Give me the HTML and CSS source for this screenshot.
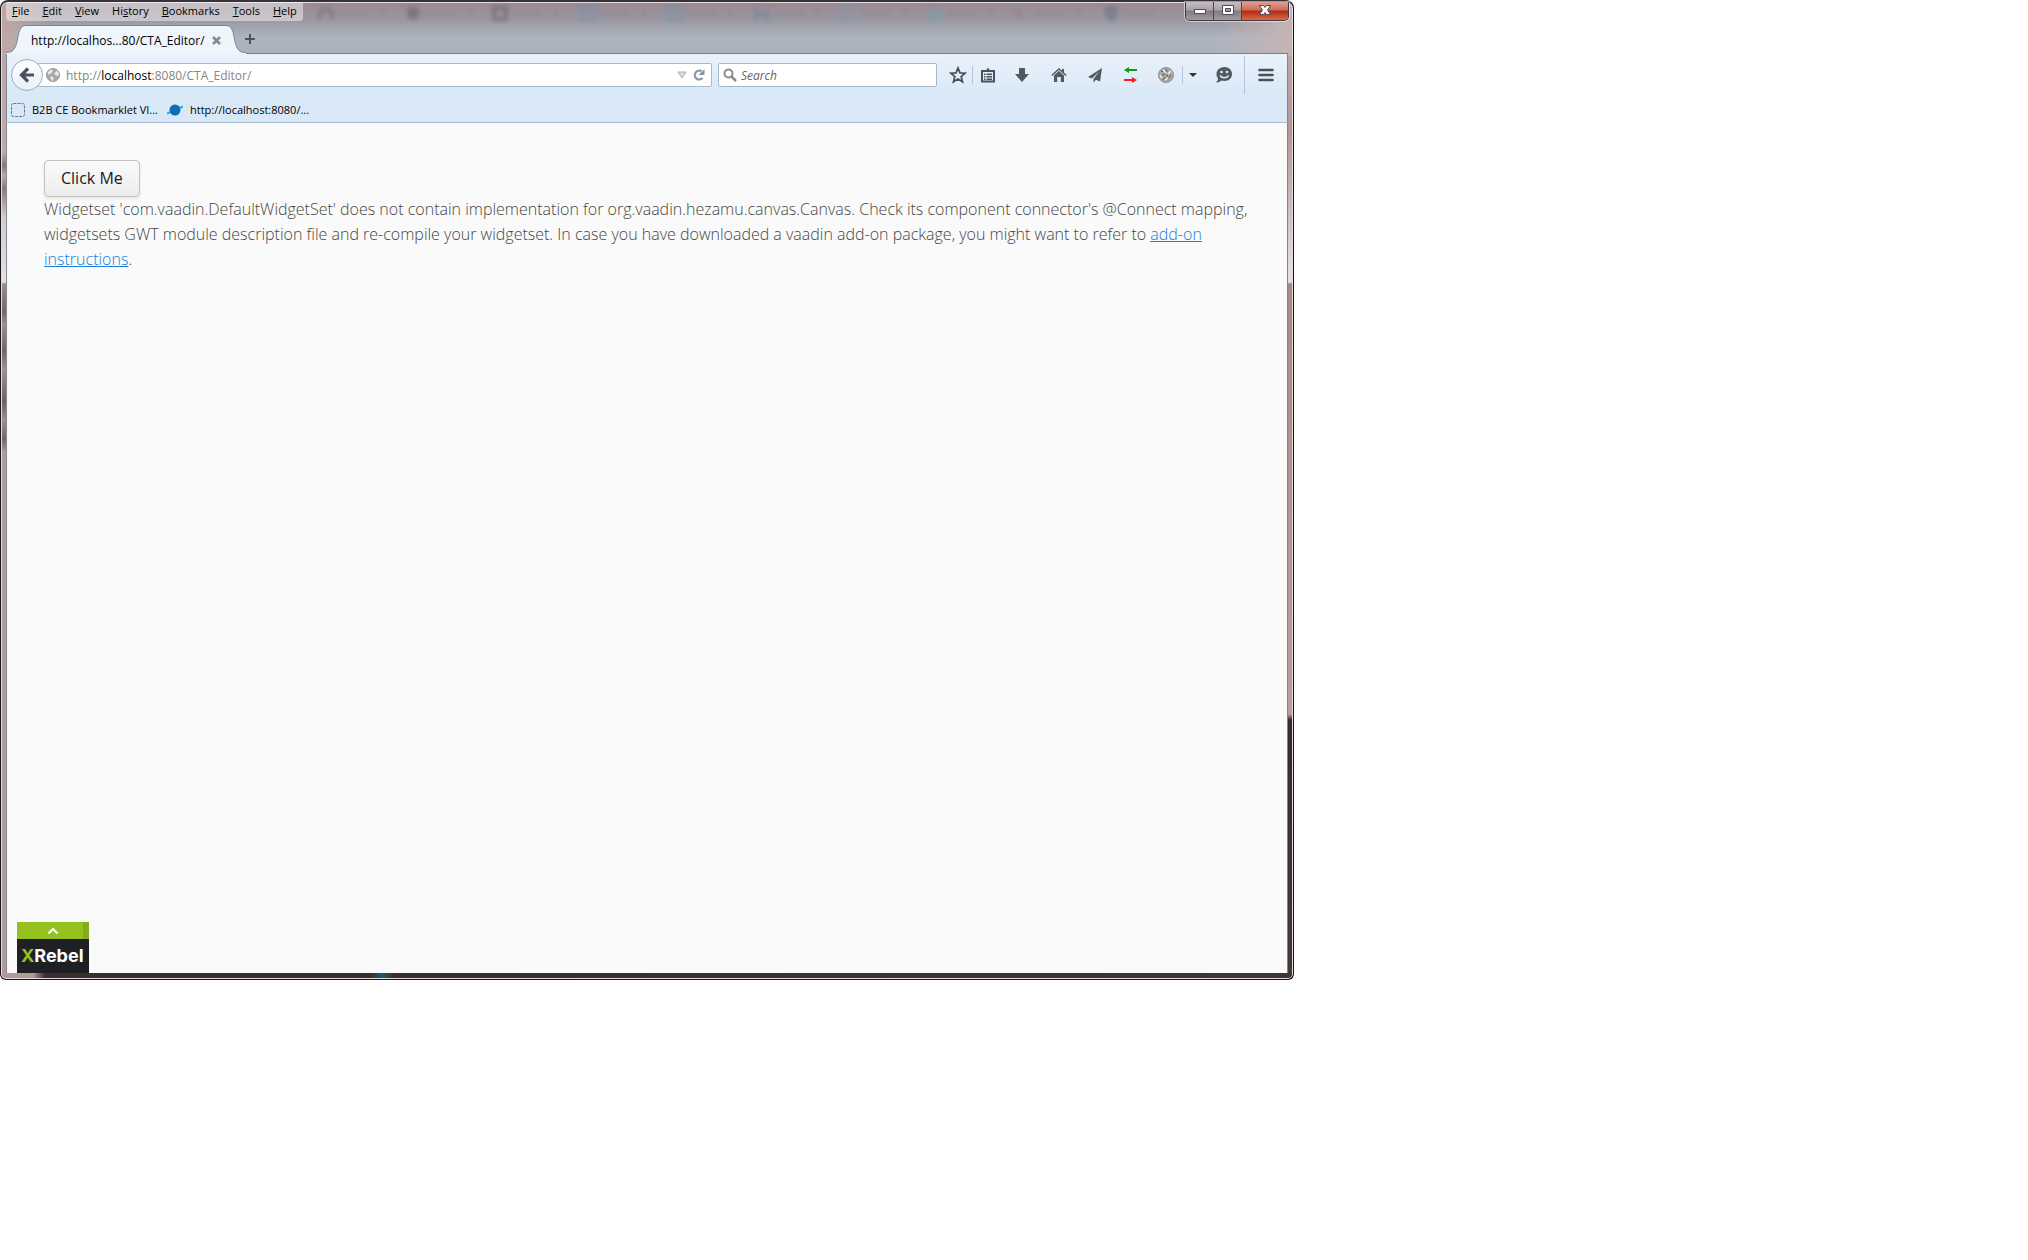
FILE: index.html
```html
<!DOCTYPE html>
<html lang="en">
<head>
    <meta charset="UTF-8">
    <meta name="viewport" content="width=device-width, initial-scale=1.0">
    <title>CTA_Editor</title>
    <link rel="stylesheet" href="styles.css">
</head>
<body>
    <div class="window">
        <!-- blurred tabs of the window behind the glass -->
        <svg class="glass" width="1200" height="40" viewBox="0 0 1200 40" aria-hidden="true">
            <g fill="none" stroke-width="4">
                <path stroke="#66656c" d="M319 17v-4a6 6 0 0 1 12 0v4"/>
                <circle cx="412" cy="11" r="5" fill="#55545b" stroke="#66656c"/>
                <rect x="493" y="6" width="12" height="11" stroke="#5b5a62"/>
                <rect x="580" y="6" width="12" height="11" stroke="#6f93b0"/>
                <rect x="667" y="6" width="12" height="11" stroke="#6f93b0"/>
                <path stroke="#66839f" d="M755 7v9l6-5 6 5V7"/>
                <path stroke="#7f98ae" d="M841 17V6h12M841 17h12"/>
                <path stroke="#6f9fae" d="M930 6v12l10-6z"/>
                <path stroke="#9c6f78" d="M1014 8l8 8"/>
                <path stroke="#56617e" d="M1106 7h8v6l-4 4-4-4z"/>
            </g>
            <g fill="#85838c">
                <rect x="336" y="10" width="32" height="4"/><rect x="379" y="9" width="5" height="5"/>
                <rect x="422" y="10" width="32" height="4"/><rect x="467" y="9" width="5" height="5"/>
                <rect x="512" y="10" width="30" height="4"/><rect x="553" y="9" width="5" height="5"/>
                <rect x="598" y="10" width="30" height="4"/><rect x="640" y="9" width="5" height="5"/>
                <rect x="686" y="10" width="30" height="4"/><rect x="727" y="9" width="5" height="5"/>
                <rect x="774" y="10" width="30" height="4"/><rect x="814" y="9" width="5" height="5"/>
                <rect x="860" y="10" width="30" height="4"/><rect x="902" y="9" width="5" height="5"/>
                <rect x="946" y="10" width="30" height="4"/><rect x="988" y="9" width="5" height="5"/>
                <rect x="1034" y="10" width="30" height="4"/><rect x="1075" y="9" width="5" height="5"/>
                <rect x="1124" y="10" width="30" height="4"/>
            </g>
        </svg>

        <header class="titlebar">
            <nav class="menu">
                <a href="#"><u>F</u>ile</a>
                <a href="#"><u>E</u>dit</a>
                <a href="#"><u>V</u>iew</a>
                <a href="#">Hi<u>s</u>tory</a>
                <a href="#"><u>B</u>ookmarks</a>
                <a href="#"><u>T</u>ools</a>
                <a href="#"><u>H</u>elp</a>
            </nav>
            <div class="controls">
                <button class="minimize" aria-label="Minimize">
                    <svg width="14" height="14" viewBox="0 0 14 14"><rect x="1.5" y="6.5" width="11" height="4" fill="#fff" stroke="#4b4b5c"/></svg>
                </button>
                <button class="maximize" aria-label="Maximize">
                    <svg width="14" height="14" viewBox="0 0 14 14"><path fill="#fff" fill-rule="evenodd" stroke="#4b4b5c" d="M1.500 2.500h11v9h-11zM4.500 5.500v3h5v-3z"/></svg>
                </button>
                <button class="close" aria-label="Close">
                    <svg width="14" height="14" viewBox="0 0 14 14"><path fill="#fff" stroke="#4b4b5c" d="M1.500 2.500h4L7 4.500l1.500-2h4L9.500 7l3 4.500h-4L7 9.500l-1.500 2h-4L4.500 7z"/></svg>
                </button>
            </div>
        </header>

        <div class="tabs">
            <svg width="24" height="29" viewBox="0 0 24 29">
                <path fill="#f0f5fc" d="M0 29v-1.500c7 0 9-3 11-11C13 6 14 .5 20 .5h4V29z"/>
                <path fill="none" stroke="#7a8793" d="M0 27.500c7 0 9-3 11-11C13 6 14 .5 20 .5h4"/>
            </svg>
            <div class="tab">
                <span class="tab-title">http://localhos...80/CTA_Editor/</span>
                <button class="tab-close" aria-label="Close tab">
                    <svg width="9" height="9" viewBox="0 0 9 9"><path stroke="#808a96" stroke-width="2.500" d="M1 1l7 7M8 1L1 8"/></svg>
                </button>
            </div>
            <svg width="24" height="29" viewBox="0 0 24 29">
                <path fill="#f0f5fc" d="M24 29v-1.500c-7 0-9-3-11-11C11 6 10 .5 4 .5H0V29z"/>
                <path fill="none" stroke="#7a8793" d="M24 27.500c-7 0-9-3-11-11C11 6 10 .5 4 .5H0"/>
            </svg>
            <button class="tab-new" aria-label="New tab">
                <svg width="12" height="12" viewBox="0 0 12 12"><path stroke="#4a545f" stroke-width="2" d="M6 1v10M1 6h10"/></svg>
            </button>
        </div>

        <div class="toolbox">
            <div class="navbar">
                <button class="back" aria-label="Back">
                    <svg width="16" height="16" viewBox="0 0 16 16"><path fill="none" stroke="#4a525c" stroke-width="3.200" d="M9 1.500L2.500 8 9 14.500M3 8h12"/></svg>
                </button>
                <div class="urlbar">
                    <svg width="14" height="14" viewBox="0 0 14 14">
                        <circle cx="7" cy="7" r="6.500" fill="#a8a8a8" stroke="#9a9a9a"/>
                        <path fill="#e9e9e9" d="M2 4l3-2.500 2 1L5.500 5 3.500 6 2 7zM8 6l3-3.500L13 6l-1 2-2-.5zM4 8l4 1.500-1 3H5.500z"/>
                    </svg>
                    <div class="url" role="textbox" aria-label="Address" contenteditable="true" spellcheck="false">http://<b>localhost</b>:8080/CTA_Editor/</div>
                    <svg width="10" height="8" viewBox="0 0 10 8"><path fill="#d5dde6" stroke="#a9b2bc" d="M.8 1h8.400L5 7z"/></svg>
                    <button aria-label="Reload">
                        <svg width="12" height="12" viewBox="0 0 12 12"><path fill="none" stroke="#8593a2" stroke-width="2.200" d="M9.500 9A4.400 4.400 0 1 1 8.500 2.300"/><path fill="#8593a2" d="M11.500 0v6h-6z"/></svg>
                    </button>
                </div>
                <label class="search">
                    <svg width="14" height="14" viewBox="0 0 14 14"><circle cx="5.500" cy="5.500" r="4" fill="none" stroke="#8a8a8a" stroke-width="2"/><path stroke="#8a8a8a" stroke-width="2.500" d="M8.500 8.500L13 13"/></svg>
                    <input type="text" placeholder="Search" aria-label="Search">
                </label>
                <div class="tools">
                    <button class="star" aria-label="Bookmark this page">
                        <svg width="18" height="18" viewBox="0 0 18 18"><path fill="none" stroke="#48515b" stroke-width="1.800" d="M9 2l2 4.800 5.200.4-4 3.400 1.300 5.200L9 13l-4.500 2.800 1.300-5.200-4-3.400L7 6.800z"/></svg>
                    </button>
                    <button class="list" aria-label="Show your bookmarks">
                        <svg width="16" height="16" viewBox="0 0 16 16"><path fill="none" stroke="#48515b" stroke-width="2" d="M2 4h12v10.500H2z"/><path fill="#48515b" d="M4 4l2.500-1L8 .5 9.500 3 12 4v1H4zM4 6.500h1.500V8H4zM6.500 6.500H12V8H6.500zM4 9h1.500v1.500H4zM6.500 9H12v1.500H6.500zM4 11.500h1.500V13H4zM6.500 11.500H12V13H6.500z"/></svg>
                    </button>
                    <button class="download" aria-label="Downloads">
                        <svg width="16" height="16" viewBox="0 0 16 16"><path fill="#505a65" d="M5 1h6v6h4l-7 8-7-8h4z"/></svg>
                    </button>
                    <button class="home" aria-label="Home">
                        <svg width="16" height="16" viewBox="0 0 16 16"><path fill="none" stroke="#505a65" stroke-width="1.600" d="M.8 8.500L8 2l7.200 6.500"/><path fill="#505a65" d="M3 8.500L8 4l5 4.500V15H9.800v-5H6.200v5H3zM11 2h2v4l-2-2z"/></svg>
                    </button>
                    <button class="share" aria-label="Share this page">
                        <svg width="16" height="16" viewBox="0 0 16 16"><path fill="#505a65" d="M15 1L1 10l4 1.500L12.500 4 6.500 12v3.500l2.500-2.700 4 1.700z"/></svg>
                    </button>
                    <button class="proxy" aria-label="Proxy">
                        <svg width="14" height="16" viewBox="0 0 14 16"><path fill="#0a9c12" d="M0 3l5-3v2h8v2H5v2z"/><path fill="#ee1c24" d="M13 13l-5 3v-2H0v-2h8v-2z"/></svg>
                    </button>
                    <button class="globe" aria-label="Add-on">
                        <svg width="16" height="16" viewBox="0 0 16 16"><circle cx="8" cy="8" r="7.500" fill="#aaa8a5" stroke="#8f8d8a"/><path stroke="#5f5d5b" d="M3 4l3 1M8 2l1 3M3 9l4-2M5 13l2-3M10 12l3-4M8 8l2 1"/><path stroke="#eee" stroke-width="1.500" d="M5 3l3 3M10 7l3-3M2 8l2 3M7 13l3-2"/></svg>
                    </button>
                    <button class="more" aria-label="Add-on options">
                        <svg width="8" height="6" viewBox="0 0 8 6"><path fill="#2f3438" d="M0 1h8L4 5z"/></svg>
                    </button>
                    <button class="hello" aria-label="Start a conversation">
                        <svg width="18" height="16" viewBox="0 0 18 16"><path fill="#505a65" d="M9.500 0C14 0 17 3 17 7s-3 7-7.500 7c-1 0-2-.2-3-.5C5 15 3 15.500 1 15.500 2 14.500 3 13.500 3 11.500 2 10.300 1.500 9 1.500 7 1.500 3 5 0 9.500 0z"/><circle cx="6.500" cy="5" r="1.300" fill="#dfebf7"/><circle cx="12" cy="5" r="1.300" fill="#dfebf7"/><path fill="none" stroke="#dfebf7" stroke-width="1.500" d="M5 8.500c2 3 6.500 3 8.500 0"/></svg>
                    </button>
                    <button class="hamburger" aria-label="Open menu">
                        <svg width="16" height="14" viewBox="0 0 16 14"><path stroke="#48515b" stroke-width="2.600" stroke-linecap="round" d="M1.500 2h13M1.500 7h13M1.500 12h13"/></svg>
                    </button>
                </div>
            </div>
            <nav class="bookmarks">
                <a href="#">
                    <svg width="14" height="14" viewBox="0 0 14 14"><rect x=".5" y=".5" width="13" height="13" rx="2" fill="none" stroke="#6b7580" stroke-dasharray="3 1"/></svg>
                    B2B CE Bookmarklet VI...
                </a>
                <a href="#">
                    <svg width="16" height="14" viewBox="0 0 16 14"><path stroke="#2aa5dc" stroke-width="2" d="M0 10.500L16 3.500"/><circle cx="8" cy="7" r="5.500" fill="#0d6db3"/></svg>
                    http://localhost:8080/...
                </a>
            </nav>
        </div>

        <main class="page">
            <button class="v-button">Click Me</button>
            <p class="v-message">Widgetset 'com.vaadin.DefaultWidgetSet' does not contain implementation for org.vaadin.hezamu.canvas.Canvas. Check its component connector's @Connect mapping, widgetsets GWT module description file and re-compile your widgetset. In case you have downloaded a vaadin add-on package, you might want to refer to <a href="#">add-on instructions</a>.</p>
            <div class="xrebel">
                <button class="xrebel-toggle" aria-label="Expand">
                    <svg width="12" height="8" viewBox="0 0 12 8"><path fill="none" stroke="#fff" stroke-width="2" d="M1.500 6.500L6 2l4.500 4.500"/></svg>
                </button>
                <div class="xrebel-logo"><span>X</span>Rebel</div>
            </div>
        </main>
    </div>
</body>
</html>
```
FILE: styles.css
```css
* {
    box-sizing: border-box;
}
body {
    margin: 0;
    background: #fff;
    font-family: "Open Sans", "Noto Sans", sans-serif;
    font-size: 12px;
    color: #000;
}
button {
    display: flex;
    align-items: center;
    justify-content: center;
    padding: 0;
    border: none;
    background: none;
    font-family: inherit;
}
svg {
    display: block;
    flex: none;
}
a {
    color: inherit;
    text-decoration: none;
}

/* window frame */
.window {
    position: relative;
    display: flex;
    flex-direction: column;
    width: 100%;
    max-width: 1294px;
    min-height: 980px;
    padding: 0 5px 6px;
    border: 1px solid #17171b;
    border-top: 2px solid #34323c;
    border-radius: 8px 8px 6px 6px;
    box-shadow: inset 0 0 0 1px #e6dddd;
    background:
        linear-gradient(to right, #b39a96 0, #b39a96 32px, #3a2e2c 44px, #3a2e2c 370px, #1f5a76 380px, #3a2e2c 394px, #403533 100%) bottom / 100% 6px no-repeat,
        linear-gradient(to bottom, transparent 53px, #bda5a3 54px, #b09795 130px, #e7e1e5 280px, #a48b86 282px, #b89f9c 712px, #352b29 718px, #453a38 100%) right / 8px 100% no-repeat,
        linear-gradient(to bottom, transparent 53px, #bda5a3 54px, #c1aaa7 150px, #8c7977 164px, #c1aaa7 174px, #8c7977 186px, #d5c9cc 215px, #e7e1e5 280px, #a48b86 282px, #796663 310px, #a68f8b 322px, #796663 348px, #a68f8b 368px, #745f5d 400px, #a68f8b 418px, #796663 437px, #b39a96 450px) left / 8px 100% no-repeat,
        linear-gradient(to right, #c0a6a2 0, transparent 50px, transparent 94%, #c7b4b3 100%),
        linear-gradient(to bottom, #998892 0, #9a98a1 18px, #adb5c2 36px, #abb2bd 53px, #fafafa 54px);
}
.glass {
    position: absolute;
    left: 0;
    top: 0;
    filter: blur(2px);
    opacity: 0.5;
}

/* menu and window buttons */
.titlebar {
    position: relative;
    display: flex;
    align-items: flex-start;
    justify-content: space-between;
    height: 23px;
}
.menu {
    display: flex;
    gap: 13px;
    height: 19px;
    padding: 0 6px;
    font-size: 11px;
    line-height: 17px;
    border-radius: 0 0 4px 4px;
    background: rgba(255, 255, 255, 0.45);
}
.controls {
    display: flex;
    height: 19px;
    margin-right: -1px;
    border: 1px solid #3f3a42;
    border-top: none;
    border-radius: 0 0 5px 5px;
    box-shadow: 0 0 0 1px rgba(255, 255, 255, 0.5);
    overflow: hidden;
}
.controls button {
    width: 28px;
    height: 18px;
    padding-bottom: 2px;
    border-right: 1px solid #4a454c;
    background: linear-gradient(#c7bcc1 0, #aaa1a7 45%, #827a80 50%, #a29ba0 100%);
}
.controls .close {
    width: 46px;
    border-right: none;
    background: linear-gradient(#dfa091 0, #cc6c57 45%, #b12a11 50%, #db6a49 100%);
}

/* tab strip */
.tabs {
    position: relative;
    display: flex;
    height: 29px;
    border-bottom: 1px solid #75808c;
}
.tab {
    display: flex;
    align-items: center;
    justify-content: space-between;
    width: 192px;
    height: 29px;
    padding: 0 1px;
    border-top: 1px solid #7a8793;
    background: #f0f5fc;
}
.tab-new {
    width: 12px;
    margin-left: -2px;
}

/* toolbars */
.toolbox {
    position: relative;
    height: 69px;
    border: 1px solid #7d8792;
    border-top: none;
    border-bottom-color: #a6bdd3;
    background: linear-gradient(#eaf2fb, #d9e8f7 42px);
}
.navbar {
    display: flex;
    align-items: center;
    height: 42px;
    padding: 0 1px 0 4px;
}
.back {
    position: relative;
    z-index: 1;
    width: 32px;
    height: 32px;
    border: 1px solid #98adc2;
    border-radius: 50%;
    background: linear-gradient(#fdfeff, #eaf1f9);
}
.urlbar,
.search {
    display: flex;
    align-items: center;
    height: 24px;
    border: 1px solid #a5bacf;
    border-radius: 2px;
    background: #fff;
}
.urlbar {
    flex: 1;
    gap: 6px;
    margin-left: -6px;
    padding: 0 6px 0 8px;
}
.url {
    flex: 1;
    color: #858585;
    outline: none;
}
.url b {
    font-weight: normal;
    color: #000;
}
.search {
    width: 219px;
    gap: 4px;
    margin-left: 6px;
    padding: 0 4px;
}
.search input {
    flex: 1;
    min-width: 0;
    padding: 0;
    border: none;
    outline: none;
    background: none;
    font-family: inherit;
    font-size: 12px;
}
.search input::placeholder {
    font-style: italic;
    color: #666;
}
.tools {
    display: flex;
    align-items: center;
    height: 42px;
    padding-left: 6px;
}
.tools button {
    width: 36px;
    height: 18px;
}
.tools .star,
.tools .list {
    width: 30px;
}
.tools .star,
.tools .globe {
    border-right: 1px solid #b3c6d9;
}
.tools .download {
    width: 38px;
}
.tools .globe {
    width: 34px;
}
.tools .more {
    width: 20px;
}
.tools .hello {
    width: 41px;
}
.tools .hamburger {
    width: 42px;
    height: 38px;
    border-left: 1px solid #b3c6d9;
}
.bookmarks {
    display: flex;
    gap: 9px;
    padding: 0 4px;
    font-size: 11px;
    line-height: 27px;
}
.bookmarks a {
    display: flex;
    align-items: center;
    gap: 7px;
}

/* page */
.page {
    position: relative;
    flex: 1;
    padding: 37px;
    border: 1px solid #7d8792;
    border-top: none;
    border-bottom: none;
    background: #fafafa;
    font-size: 16px;
}
.v-button {
    height: 37px;
    padding: 0 16px 2px;
    border: 1px solid #c0c0c0;
    border-radius: 4px;
    background: linear-gradient(#fafafa, #ededed);
    box-shadow: 0 2px 3px rgba(0, 0, 0, 0.07);
    font-size: 16px;
    color: #191919;
}
.v-message {
    margin: 0;
    font-weight: 300;
    line-height: 25px;
    color: #464646;
}
.v-message a {
    color: #197de1;
    text-decoration: underline;
}

/* XRebel badge in the corner of the page */
.xrebel {
    position: absolute;
    left: 10px;
    bottom: 0;
    width: 72px;
}
.xrebel-toggle {
    width: 100%;
    height: 17px;
    background: #95c11f;
    box-shadow: inset -6px 0 0 #84ab1b;
}
.xrebel-logo {
    height: 34px;
    padding-left: 4px;
    background: #1e2024;
    font-family: Inter, sans-serif;
    font-size: 18px;
    font-weight: 700;
    line-height: 33px;
    color: #fff;
}
.xrebel-logo span {
    color: #95c11f;
}
```
